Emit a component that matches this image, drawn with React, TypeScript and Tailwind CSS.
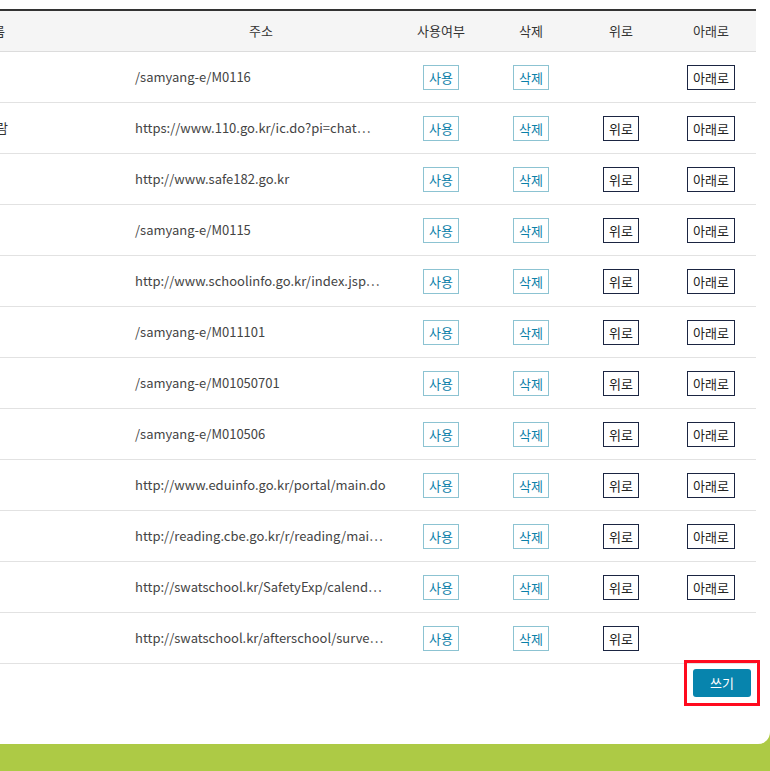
import React from "react";

type Row = {
  name: string;
  url: string;
  up: boolean;
  down: boolean;
};

const rows: Row[] = [
  { name: "학교 홈페이지", url: "/samyang-e/M0116", up: false, down: true },
  { name: "국민신문고 110 채팅 열람", url: "https://www.110.go.kr/ic.do?pi=chat⋯", up: true, down: true },
  { name: "안전드림", url: "http://www.safe182.go.kr", up: true, down: true },
  { name: "학교 안내", url: "/samyang-e/M0115", up: true, down: true },
  { name: "학교알리미", url: "http://www.schoolinfo.go.kr/index.jsp⋯", up: true, down: true },
  { name: "가정통신문", url: "/samyang-e/M011101", up: true, down: true },
  { name: "학사일정", url: "/samyang-e/M01050701", up: true, down: true },
  { name: "급식안내", url: "/samyang-e/M010506", up: true, down: true },
  { name: "에듀인포", url: "http://www.eduinfo.go.kr/portal/main.do", up: true, down: true },
  { name: "독서교육", url: "http://reading.cbe.go.kr/r/reading/mai⋯", up: true, down: true },
  { name: "안전체험", url: "http://swatschool.kr/SafetyExp/calend⋯", up: true, down: true },
  { name: "방과후 설문", url: "http://swatschool.kr/afterschool/surve⋯", up: true, down: false },
];

const cols = "grid grid-cols-[266px_270px_90px_90px_90px_90px] items-center";

function TealBtn({ label }: { label: string }) {
  return (
    <button className="h-[25px] border border-[#8cc3d2] bg-white px-[5px] text-[13px] leading-none text-[#0b80a8]">
      {label}
    </button>
  );
}

function NavyBtn({ label }: { label: string }) {
  return (
    <button className="h-[25px] border border-[#1b2542] bg-white px-[5px] text-[13px] leading-none text-[#222]">
      {label}
    </button>
  );
}

export default function App() {
  return (
    <div className="min-h-[771px] overflow-hidden bg-[#adca45] font-['Noto_Sans_CJK_KR',sans-serif] text-[#333]">
      <div className="h-[744px] overflow-hidden rounded-br-[12px] bg-white pr-[14px] pt-[9px]">
        <div className="ml-[-140px]">
          {/* header */}
          <div className={cn(cols, "h-[43px] border-t-2 border-b border-t-[#333] border-b-[#dcdcdc] bg-[#f5f5f5] text-center text-[13px]")}>
            <div>이름</div>
            <div>주소</div>
            <div>사용여부</div>
            <div>삭제</div>
            <div>위로</div>
            <div>아래로</div>
          </div>

          {rows.map((r) => (
            <div key={r.url} className={cn(cols, "h-[51px] border-b border-[#e2e2e2] text-[13px]")}>
              <div className="truncate pl-[10px] text-left">{r.name}</div>
              <div className="truncate pl-[9px] pr-[6px] text-[#444]">{r.url}</div>
              <div className="flex justify-center">
                <TealBtn label="사용" />
              </div>
              <div className="flex justify-center">
                <TealBtn label="삭제" />
              </div>
              <div className="flex justify-center">{r.up && <NavyBtn label="위로" />}</div>
              <div className="flex justify-center">{r.down && <NavyBtn label="아래로" />}</div>
            </div>
          ))}

          <div className="flex justify-end pr-[5px] pt-[5px]">
            <div className="relative">
              <button className="h-[28px] w-[58px] rounded-[3px] bg-[#0784ad] text-[13px] text-white">쓰기</button>
              <span className="pointer-events-none absolute -inset-[9px] border-[3px] border-[#ff0a1e]" />
            </div>
          </div>
        </div>
      </div>
    </div>
  );
}

function cn(...c: string[]) {
  return c.join(" ");
}
